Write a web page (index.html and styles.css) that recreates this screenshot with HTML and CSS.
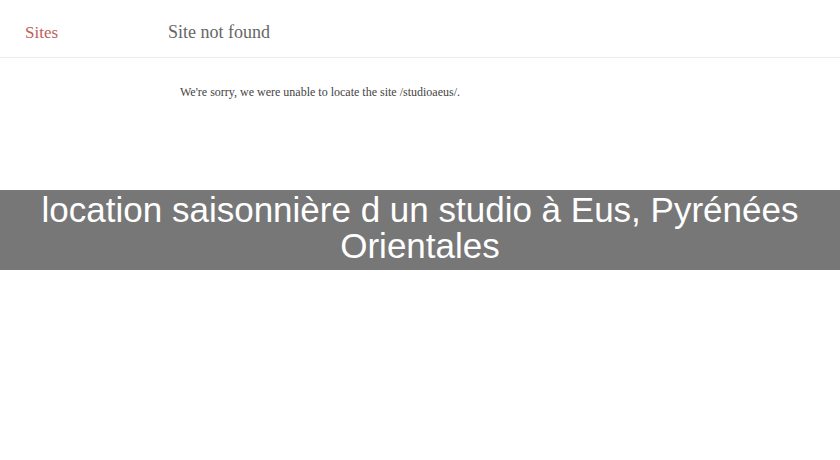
FILE: index.html
```html
<!DOCTYPE html>
<html lang="fr">
<head>
    <meta charset="UTF-8">
    <title>location saisonnière d un studio à Eus, Pyrénées Orientales</title>
    <link rel="stylesheet" href="styles.css">
</head>
<body>
    <header class="top-bar">
        <a class="brand" href="#">Sites</a>
        <h1 class="page-title">Site not found</h1>
    </header>

    <main class="content">
        <p class="message">We're sorry, we were unable to locate the site /studioaeus/.</p>
    </main>

    <div class="banner">
        <h2>location saisonnière d un studio à Eus, Pyrénées Orientales</h2>
    </div>
</body>
</html>
```

FILE: styles.css
```css
/* Global */
body {
    margin: 0;
    padding: 0;
    background: #fff;
    font-family: "Liberation Serif", serif;
}

/* Header */
.top-bar {
    height: 57px;
    border-bottom: 1px solid #ececec;
    display: flex;
    align-items: baseline;
    padding: 0 0 0 25px;
}

.brand {
    color: #c0605a;
    text-decoration: none;
    font-size: 17px;
    line-height: 60px;
    width: 143px;
}

.page-title {
    margin: 0;
    font-weight: normal;
    font-size: 18px;
    color: #666;
    line-height: 64px;
}

/* Content */
.content {
    padding: 27px 0 0 180px;
    height: 105px;
}

.message {
    margin: 0;
    font-size: 12px;
    color: #444;
}

/* Banner */
.banner {
    background: #777;
    padding: 2px 20px 6px;
}

.banner h2 {
    margin: 0;
    color: #fff;
    font-family: "Liberation Sans", Arial, sans-serif;
    font-weight: normal;
    font-size: 35px;
    line-height: 36px;
    text-align: center;
}
```
